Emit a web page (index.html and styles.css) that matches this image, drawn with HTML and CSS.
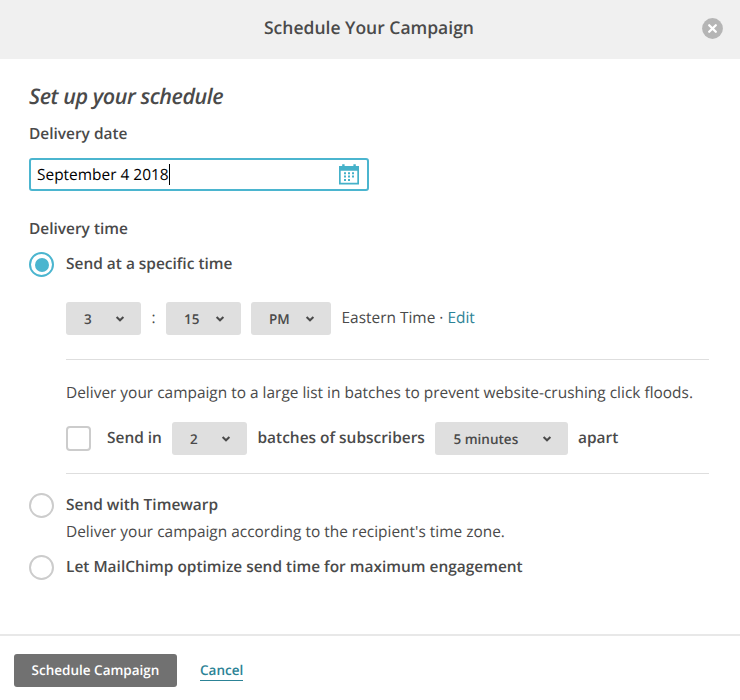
FILE: index.html
```html
<!DOCTYPE html>
<html lang="en">
<head>
<meta charset="utf-8">
<title>Schedule Your Campaign</title>
<link rel="stylesheet" href="styles.css">
</head>
<body>
<svg class="defs" width="0" height="0"><symbol id="chev" viewBox="0 0 10 8"><path d="M1.6 2 L5 5.3 L8.4 2" fill="none" stroke="#4a4a4a" stroke-width="2"/></symbol></svg>
<div class="modal">
  <header class="head">
    <h1 class="title">Schedule Your Campaign</h1>
    <svg class="close" viewBox="0 0 21 21"><circle cx="10.5" cy="10.5" r="10.4" fill="#b5b5b5"/><path d="M7.200 7.200l6.600 6.600M13.800 7.200l-6.600 6.600" stroke="#fff" stroke-width="2.3" stroke-linecap="round"/></svg>
  </header>
  <main class="main">
    <h2 class="heading">Set up your schedule</h2>
    <div class="label label-date">Delivery date</div>
    <div class="input">
      <span class="value">September 4 2018</span><span class="caret"></span>
      <svg class="cal" viewBox="0 0 22 22"><path fill="#45b1c9" fill-rule="evenodd" d="M1 3H4.200V1.200H6.600V3H15.400V1.200H17.800V3H21V21.500H1ZM2.700 7.700V19.800H19.300V7.700Z"/><path fill="#45b1c9" d="M10 9.200h2v2h-2zM14 9.200h2v2h-2zM6 9.200h2v2h-2zM6 12.600h2v2h-2zM10 12.600h2v2h-2zM14 12.600h2v2h-2zM6 16h2v2h-2zM10 16h2v2h-2z"/></svg>
    </div>
    <div class="label label-time">Delivery time</div>
    <div class="option option-specific"><span class="radio on"></span><span class="strong specific">Send at a specific time</span></div>
    <div class="details">
      <div class="row times">
        <div class="select"><span>3</span><svg class="chev"><use href="#chev"/></svg></div>
        <span class="colon">:</span>
        <div class="select"><span>15</span><svg class="chev"><use href="#chev"/></svg></div>
        <div class="select select-pm"><span>PM</span><svg class="chev"><use href="#chev"/></svg></div>
        <span class="zone">Eastern Time · <a class="edit">Edit</a></span>
      </div>
      <p class="note">Deliver your campaign to a large list in batches to prevent website-crushing click floods.</p>
      <div class="row batch">
        <span class="check"></span>
        <span class="strong send-in">Send in</span>
        <div class="select"><span>2</span><svg class="chev"><use href="#chev"/></svg></div>
        <span class="strong batches">batches of subscribers</span>
        <div class="select select-min"><span>5 minutes</span><svg class="chev"><use href="#chev"/></svg></div>
        <span class="strong apart">apart</span>
      </div>
    </div>
    <div class="option option-warp"><span class="radio"></span><span class="strong warp">Send with Timewarp</span></div>
    <p class="desc">Deliver your campaign according to the recipient's time zone.</p>
    <div class="option option-opt"><span class="radio"></span><span class="strong optimize">Let MailChimp optimize send time for maximum engagement</span></div>
  </main>
  <footer class="foot">
    <div class="button">Schedule Campaign</div>
    <a class="cancel">Cancel</a>
  </footer>
</div>
</body>
</html>
```
FILE: styles.css
```css
* { box-sizing: border-box; }
body { margin: 0; font-family: "Open Sans", sans-serif; font-size: 15.45px; line-height: 24px; color: #4a4a4a; background: #fff; text-rendering: geometricPrecision; }
h1, h2, p { margin: 0; }
span, a, h1, h2, p, .label, .button { white-space: nowrap; }
.defs { position: absolute; }
.modal { height: 700px; display: flex; flex-direction: column; }
.head { height: 59px; padding: 0 17.5px 3px 264px; display: flex; align-items: center; justify-content: space-between; background: #f0f0f0; }
.title { font-size: 17.5px; font-weight: 600; }
.close { width: 21px; height: 21px; }
.main { height: 575px; padding: 23px 30px 0 29px; }
.heading { font-size: 21.5px; line-height: 30px; font-weight: 600; font-style: italic; letter-spacing: -0.45px; }
.label { font-weight: 600; }
.label-date { margin-top: 9px; }
.input { width: 340px; height: 33px; margin-top: 13px; padding: 0 7px 0 6px; display: flex; align-items: center; border: 2px solid #4bb5cf; border-radius: 3px; color: #000; }
.value { margin-top: -1px; }
.caret { width: 1px; height: 21px; background: #000; }
.cal { width: 22px; height: 22px; margin: -1px 0 0 auto; }
.label-time { margin-top: 25px; }
.option { display: flex; height: 25px; gap: 12px; }
.option-specific { margin-top: 12px; }
.radio { width: 25px; height: 25px; border: 2px solid #ccc; border-radius: 50%; display: grid; place-items: center; }
.radio.on { border-color: #4bb5cf; }
.radio.on::after { content: ""; width: 14px; height: 14px; border-radius: 50%; background: #4bb5cf; }
.strong { font-weight: 600; line-height: 22px; }
.details { margin-left: 37px; width: 643px; }
.row { display: flex; align-items: center; box-sizing: content-box; height: 33px; border-bottom: 1px solid #dedede; }
.times { margin-top: 25px; padding-bottom: 24px; }
.select { width: 75px; height: 33px; padding: 0 16px 0 18px; display: flex; align-items: center; justify-content: space-between; background: #dfdfdf; border-radius: 3px; font-size: 13.5px; font-weight: 600; }
.chev { width: 10px; height: 8px; }
.colon { width: 25px; text-align: center; margin-top: -3px; }
.select-pm { width: 80px; margin-left: 10px; }
.zone { margin-left: 10.5px; margin-top: -3px; }
.edit { color: #2c8396; }
.note { margin-top: 20px; }
.batch { margin-top: 18px; padding-bottom: 18px; }
.check { width: 25px; height: 25px; border: 2px solid #ccc; border-radius: 4px; margin-right: 16px; }
.send-in { width: 65px; margin-top: -3px; }
.batches { width: 177px; margin: -3px 0 0 10.5px; }
.select-min { width: 133px; padding-left: 19px; }
.apart { margin: -3px 0 0 10.5px; }
.option-warp { margin-top: 19px; }
.desc { margin: 1px 0 0 37px; }
.option-opt { margin-top: 12px; }
.foot { height: 66px; padding: 6px 14px 1px; display: flex; align-items: center; gap: 23px; border-top: 2px solid #e8e8e8; }
.button { width: 163px; height: 33px; line-height: 33px; text-align: center; background: #717171; color: #fff; border-radius: 3px; font-size: 13.5px; font-weight: 600; }
.cancel { font-size: 13.5px; line-height: 19px; font-weight: 600; color: #2c8396; border-bottom: 1px solid #2c8396; }
```
